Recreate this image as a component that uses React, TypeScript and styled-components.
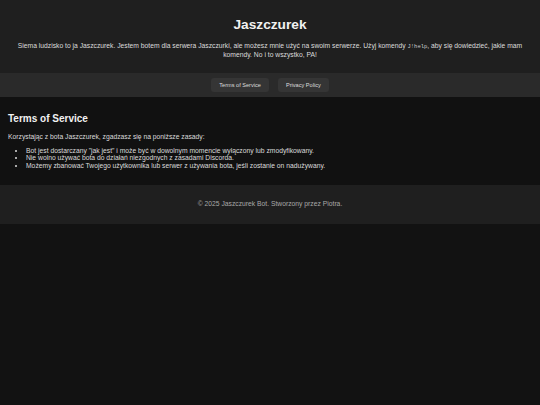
import React from "react";
import styled, { createGlobalStyle } from "styled-components";

const GlobalStyle = createGlobalStyle`
  html, body {
    margin: 0;
    padding: 0;
    background: #121212;
    color: #e0e0e0;
    font-family: "Liberation Sans", Arial, sans-serif;
  }
`;

const SCHeader = styled.header`
  background: #1f1f1f;
  padding: 17px 17px 14px;
  text-align: center;
`;

const SCTitle = styled.h1`
  margin: 0 0 10px;
  font-size: 13.7px;
  line-height: 15px;
  font-weight: 700;
  color: #f2f2f2;
`;

const SCIntro = styled.p`
  margin: 0;
  font-size: 6.75px;
  line-height: 8px;
  color: #dcdcdc;
`;

const SCCode = styled.code`
  font-family: "Liberation Mono", "DejaVu Sans Mono", monospace;
  font-size: 5.5px;
  line-height: 8px;
  color: #cfcfcf;
`;

const SCNav = styled.nav`
  background: #2a2a2a;
  height: 24px;
  display: flex;
  justify-content: center;
  align-items: center;
  gap: 9px;
`;

const SCNavButton = styled.a`
  display: block;
  background: #353535;
  color: #dedede;
  font-size: 5.6px;
  line-height: 14px;
  padding: 0 8px;
  border-radius: 3px;
  text-decoration: none;
`;

const SCMain = styled.main`
  background: #111111;
  padding: 16px 9px 16px 8px;
`;

const SCHeading = styled.h2`
  margin: 0 0 8px;
  font-size: 10px;
  line-height: 12px;
  font-weight: 700;
  color: #f2f2f2;
`;

const SCText = styled.p`
  margin: 0 0 6px;
  font-size: 6.75px;
  line-height: 8px;
  color: #dcdcdc;
`;

const SCList = styled.ul`
  margin: 0;
  padding-left: 18px;
  font-size: 6.75px;
  line-height: 7.3px;
  color: #dcdcdc;
`;

const SCFooter = styled.footer`
  background: #1f1f1f;
  padding: 15.5px 0;
  text-align: center;
  font-size: 6.75px;
  line-height: 8px;
  color: #a8a8a8;
`;

const rules = [
  'Bot jest dostarczany "jak jest" i może być w dowolnym momencie wyłączony lub zmodyfikowany.',
  "Nie wolno używać bota do działań niezgodnych z zasadami Discorda.",
  "Możemy zbanować Twojego użytkownika lub serwer z używania bota, jeśli zostanie on nadużywany.",
];

export default function App() {
  return (
    <>
      <GlobalStyle />
      <SCHeader>
        <SCTitle>Jaszczurek</SCTitle>
        <SCIntro>
          Siema ludzisko to ja Jaszczurek. Jestem botem dla serwera Jaszczurki, ale możesz mnie użyć na swoim
          serwerze. Użyj komendy <SCCode>J!help</SCCode>, aby się dowiedzieć, jakie mam komendy. No i to wszystko,
          PA!
        </SCIntro>
      </SCHeader>
      <SCNav>
        <SCNavButton href="#tos">Terms of Service</SCNavButton>
        <SCNavButton href="#privacy">Privacy Policy</SCNavButton>
      </SCNav>
      <SCMain>
        <SCHeading>Terms of Service</SCHeading>
        <SCText>Korzystając z bota Jaszczurek, zgadzasz się na poniższe zasady:</SCText>
        <SCList>
          {rules.map((r) => (
            <li key={r}>{r}</li>
          ))}
        </SCList>
      </SCMain>
      <SCFooter>© 2025 Jaszczurek Bot. Stworzony przez Piotra.</SCFooter>
    </>
  );
}
